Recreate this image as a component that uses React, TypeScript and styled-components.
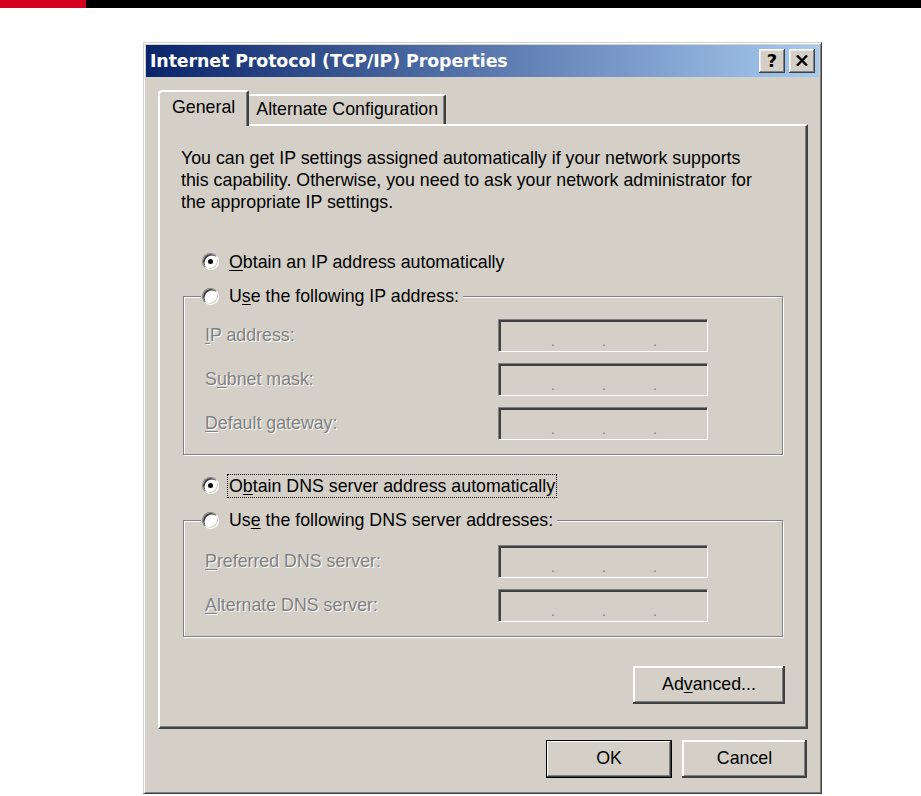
import React from "react";
import styled, { createGlobalStyle, css } from "styled-components";

const FACE = "#d4d0c8";
const SHADOW = "#808080";
const DARK = "#404040";

const Global = createGlobalStyle`
  html, body { margin: 0; padding: 0; background: #fff; }
  body { font-family: "Liberation Sans", Arial, sans-serif; font-size: 17.8px; color: #000; }
  * { box-sizing: border-box; }
`;

const Page = styled.div`
  width: 921px;
  height: 796px;
  overflow: hidden;
  background: #fff;
  display: flex;
  flex-direction: column;
`;

const TopBar = styled.div`
  display: flex;
  height: 8px;
  flex-shrink: 0;
`;
const RedBlock = styled.div`
  width: 86px;
  background: #d3001f;
`;
const BlackBlock = styled.div`
  flex: 1;
  background: #000;
`;

const Window = styled.div`
  margin: 34px 0 0 143px;
  width: 679px;
  height: 752px;
  background: ${FACE};
  border: 1px solid;
  border-color: ${FACE} ${DARK} ${DARK} ${FACE};
  box-shadow: inset 1px 1px 0 #fff, inset -1px -1px 0 ${SHADOW};
  padding: 2px;
  display: flex;
  flex-direction: column;
`;

const TitleBar = styled.div`
  height: 32px;
  flex-shrink: 0;
  display: flex;
  align-items: center;
  padding: 0 4px 0 4px;
  background: linear-gradient(to right, #0a246a 0%, #a6caf0 100%);
`;

const Title = styled.div`
  flex: 1;
  color: #fff;
  font-family: "DejaVu Sans", Verdana, sans-serif;
  font-weight: bold;
  font-size: 17.4px;
  white-space: nowrap;
  letter-spacing: -0.1px;
`;

const CaptionButton = styled.div`
  width: 26px;
  height: 24px;
  margin-left: 4px;
  background: ${FACE};
  box-shadow: inset -1px -1px 0 ${DARK}, inset 1px 1px 0 #fff, inset -2px -2px 0 ${SHADOW},
    inset 2px 2px 0 #ece9e2;
  display: flex;
  align-items: center;
  justify-content: center;
  font-family: "DejaVu Sans", Verdana, sans-serif;
  font-weight: bold;
  font-size: 18px;
  color: #000;
  padding-bottom: 1px;
`;

const Client = styled.div`
  flex: 1;
  display: flex;
  flex-direction: column;
  padding: 13px 11px 13px 12px;
`;

const TabStrip = styled.div`
  display: flex;
  align-items: flex-end;
  height: 34px;
  flex-shrink: 0;
`;

const Tab = styled.div<{ $active?: boolean }>`
  display: flex;
  align-items: center;
  white-space: nowrap;
  background: ${FACE};
  border-top: 2px solid #fff;
  border-left: 2px solid #fff;
  border-right: 2px solid ${DARK};
  border-top-left-radius: 4px;
  border-top-right-radius: 2px;
  box-shadow: inset -1px 0 0 ${SHADOW};
  ${(p) =>
    p.$active
      ? css`
          height: 36px;
          margin-bottom: -2px;
          padding: 0 12px 4px 12px;
          position: relative;
          z-index: 1;
        `
      : css`
          height: 30px;
          padding: 0 6px 2px 7px;
          border-left: none;
          border-top-left-radius: 0;
        `}
`;

const Panel = styled.div`
  width: 650px;
  height: 605px;
  flex-shrink: 0;
  border: 2px solid;
  border-color: #fff ${DARK} ${DARK} #fff;
  box-shadow: inset -1px -1px 0 ${SHADOW};
  padding: 21px 23px 23px 23px;
  display: flex;
  flex-direction: column;
`;

const Description = styled.p`
  margin: 0 0 37px -2px;
  line-height: 22px;
  white-space: nowrap;
`;

const OptionRow = styled.div<{ $gap?: number }>`
  display: flex;
  align-items: center;
  height: 24px;
  padding-left: 19px;
  margin-bottom: 11px;
`;

const RadioDot = styled.span<{ $checked?: boolean }>`
  width: 17px;
  height: 17px;
  flex-shrink: 0;
  border-radius: 50%;
  border: 1.5px solid;
  border-color: ${SHADOW} #fff #fff ${SHADOW};
  background: #fff;
  box-shadow: inset 1.5px 1.5px 0 ${DARK}, inset -1px -1px 0 ${FACE};
  display: flex;
  align-items: center;
  justify-content: center;
  &::after {
    content: "";
    width: 5px;
    height: 5px;
    border-radius: 50%;
    background: ${(p) => (p.$checked ? "#000" : "transparent")};
  }
`;

const OptionLabel = styled.span<{ $focused?: boolean }>`
  margin-left: 9px;
  padding: 0 1px;
  line-height: 22px;
  white-space: nowrap;
  outline: ${(p) => (p.$focused ? "1px dotted #000" : "none")};
  outline-offset: 0;
  u {
    text-underline-offset: 2px;
  }
`;

const Group = styled.fieldset<{ $padTop: number }>`
  margin: 0;
  min-width: 0;
  border: 1px solid ${SHADOW};
  box-shadow: inset 1px 1px 0 #fff, 1px 1px 0 #fff;
  padding: ${(p) => p.$padTop}px 0 14px 0;
`;

const Legend = styled.legend`
  margin-left: 17px;
  padding: 0 3px 0 1px;
  background: ${FACE};
  display: flex;
  align-items: center;
  height: 24px;
`;

const Fields = styled.div`
  display: grid;
  grid-template-columns: 293px 210px;
  row-gap: 11px;
  align-items: center;
  padding-left: 21px;
`;

const FieldLabel = styled.span`
  color: ${SHADOW};
  text-shadow: 1px 1px 0 #fff;
  white-space: nowrap;
  u {
    text-underline-offset: 2px;
  }
`;

const IpBox = styled.div`
  height: 33px;
  border: 1px solid;
  border-color: ${SHADOW} #fff #fff ${SHADOW};
  box-shadow: inset 2px 2px 0 ${DARK}, inset -1px -1px 0 ${FACE};
  display: grid;
  grid-template-columns: 52px 51px 51px 1fr;
  padding: 0 0 3px 4px;
  align-items: end;
`;

const Octet = styled.span`
  display: flex;
  justify-content: flex-end;
  color: ${SHADOW};
  font-size: 14px;
  line-height: 14px;
`;

const AdvancedRow = styled.div`
  display: flex;
  justify-content: flex-end;
  margin-top: 29px;
  margin-right: -2px;
`;

const Button = styled.button<{ $w: number; $default?: boolean }>`
  width: ${(p) => p.$w}px;
  height: 38px;
  padding: 0 0 1px 0;
  font: inherit;
  color: #000;
  background: ${FACE};
  border: none;
  box-shadow: ${(p) =>
    p.$default
      ? `inset 0 0 0 1px #000, inset -2px -2px 0 ${DARK}, inset 2px 2px 0 #fff, inset -3px -3px 0 ${SHADOW}`
      : `inset -2px -2px 0 ${DARK}, inset 2px 2px 0 #fff, inset -3px -3px 0 ${SHADOW}`};
  u {
    text-underline-offset: 2px;
  }
`;

const DialogButtons = styled.div`
  display: flex;
  justify-content: flex-end;
  gap: 10px;
  margin-top: 11px;
  margin-right: 1px;
`;

const CloseGlyph = () => (
  <svg width="12" height="11" viewBox="0 0 12 11">
    <path d="M1 0.5 L11 10.5 M11 0.5 L1 10.5" stroke="#000" strokeWidth="2.4" />
  </svg>
);

const IpField = () => (
  <IpBox>
    <Octet>.</Octet>
    <Octet>.</Octet>
    <Octet>.</Octet>
    <Octet />
  </IpBox>
);

export default function App() {
  return (
    <Page>
      <Global />
      <TopBar>
        <RedBlock />
        <BlackBlock />
      </TopBar>
      <Window>
        <TitleBar>
          <Title>Internet Protocol (TCP/IP) Properties</Title>
          <CaptionButton>?</CaptionButton>
          <CaptionButton>
            <CloseGlyph />
          </CaptionButton>
        </TitleBar>
        <Client>
          <TabStrip>
            <Tab $active>General</Tab>
            <Tab>Alternate Configuration</Tab>
          </TabStrip>
          <Panel>
            <Description>
              You can get IP settings assigned automatically if your network supports
              <br />
              this capability. Otherwise, you need to ask your network administrator for
              <br />
              the appropriate IP settings.
            </Description>

            <OptionRow>
              <RadioDot $checked />
              <OptionLabel>
                <u>O</u>btain an IP address automatically
              </OptionLabel>
            </OptionRow>

            <Group $padTop={11}>
              <Legend>
                <RadioDot />
                <OptionLabel>
                  U<u>s</u>e the following IP address:
                </OptionLabel>
              </Legend>
              <Fields>
                <FieldLabel>
                  <u>I</u>P address:
                </FieldLabel>
                <IpField />
                <FieldLabel>
                  S<u>u</u>bnet mask:
                </FieldLabel>
                <IpField />
                <FieldLabel>
                  <u>D</u>efault gateway:
                </FieldLabel>
                <IpField />
              </Fields>
            </Group>

            <OptionRow style={{ marginTop: 19 }}>
              <RadioDot $checked />
              <OptionLabel $focused>
                O<u>b</u>tain DNS server address automatically
              </OptionLabel>
            </OptionRow>

            <Group $padTop={13}>
              <Legend>
                <RadioDot />
                <OptionLabel>
                  Us<u>e</u> the following DNS server addresses:
                </OptionLabel>
              </Legend>
              <Fields>
                <FieldLabel>
                  <u>P</u>referred DNS server:
                </FieldLabel>
                <IpField />
                <FieldLabel>
                  <u>A</u>lternate DNS server:
                </FieldLabel>
                <IpField />
              </Fields>
            </Group>

            <AdvancedRow>
              <Button $w={152}>
                Ad<u>v</u>anced...
              </Button>
            </AdvancedRow>
          </Panel>
          <DialogButtons>
            <Button $w={126} $default>
              OK
            </Button>
            <Button $w={125}>Cancel</Button>
          </DialogButtons>
        </Client>
      </Window>
    </Page>
  );
}
